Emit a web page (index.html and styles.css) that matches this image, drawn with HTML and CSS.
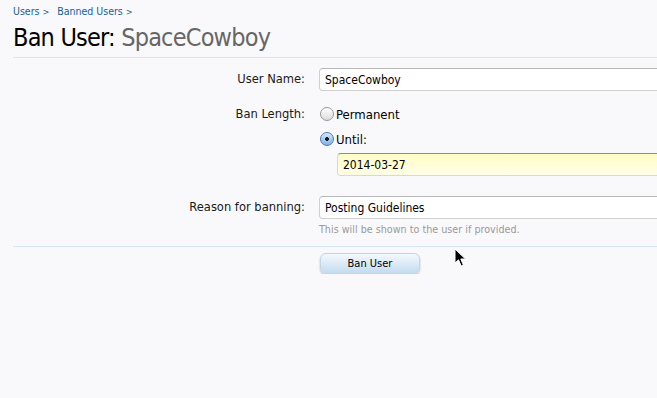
FILE: index.html
```html
<!DOCTYPE html>
<html lang="en">
<head>
    <meta charset="UTF-8">
    <title>Ban User: SpaceCowboy</title>
    <link rel="stylesheet" href="styles.css">
</head>
<body>

<div class="page">
    <div class="breadcrumb">
        <a href="#">Users</a> <span class="arrow">&gt;</span>
        <a href="#">Banned Users</a> <span class="arrow">&gt;</span>
    </div>

    <h1 class="title">Ban User: <em>SpaceCowboy</em></h1>

    <form class="ban-form">
        <div class="row">
            <label class="label" for="username">User Name:</label>
            <div class="control">
                <input type="text" id="username" class="text-input" value="SpaceCowboy">
            </div>
        </div>

        <div class="row">
            <div class="label choice-label">Ban Length:</div>
            <div class="control choices">
                <label class="choice"><input type="radio" name="length" class="radio"> Permanent</label>
                <label class="choice"><input type="radio" name="length" class="radio" checked> Until:</label>
                <input type="text" class="text-input date-input" value="2014-03-27">
            </div>
        </div>

        <div class="row reason-row">
            <label class="label" for="reason">Reason for banning:</label>
            <div class="control">
                <input type="text" id="reason" class="text-input" value="Posting Guidelines">
                <p class="hint">This will be shown to the user if provided.</p>
            </div>
        </div>

        <div class="submit-row">
            <button type="button" class="button">Ban User</button>
        </div>
    </form>
</div>

<!-- mouse pointer captured in the screenshot -->
<svg class="cursor" width="14" height="20" viewBox="0 0 14 20">
    <path d="M1 1 L1 15 L4.5 11.8 L7.2 18 L9.4 17 L6.8 11 L11.5 11 Z" fill="#000" stroke="#fff" stroke-width="1"/>
</svg>

</body>
</html>
```

FILE: styles.css
```css
html {
    overflow: hidden;
}
body {
    margin: 0;
    background-color: #f9f9fc;
    font-family: "DejaVu Sans Condensed", "DejaVu Sans", sans-serif;
    font-size: 12px;
    color: #000;
}
.page {
    width: 900px;
    padding: 0 13px;
}
.breadcrumb {
    font-size: 10.5px;
    padding-top: 5px;
    height: 14px;
    color: #176093;
}
.breadcrumb a {
    color: #176093;
    text-decoration: none;
}
.breadcrumb .arrow {
    font-size: 9px;
    margin-right: 5px;
}
.title {
    margin: 3px 0 0;
    font-size: 25px;
    font-weight: normal;
    letter-spacing: -0.8px;
    line-height: 32px;
    padding-bottom: 3px;
    border-bottom: 1px solid #d7e8f6;
    color: #000;
}
.title em {
    font-style: normal;
    color: #666;
}
.ban-form {
    padding-top: 10px;
}
.row {
    display: grid;
    grid-template-columns: 292px 1fr;
    column-gap: 14px;
    margin-bottom: 12px;
}
.label {
    text-align: right;
    font-size: 12.8px;
    line-height: 22px;
    color: #1a1a1a;
}
.choice-label {
    line-height: 16px;
    padding-top: 3px;
}
.text-input {
    box-sizing: border-box;
    width: 360px;
    height: 23px;
    padding: 0 5px;
    font-family: inherit;
    font-size: 12px;
    color: #000;
    background: #fff;
    border: 1px solid #cfcfcf;
    border-top-color: #b8b8b8;
    border-radius: 4px;
    margin: 0;
}
.choices {
    display: flex;
    flex-direction: column;
    padding-top: 3px;
}
.choice {
    display: flex;
    align-items: center;
    height: 16px;
    margin-bottom: 9px;
    font-size: 13px;
}
.radio {
    appearance: none;
    width: 14px;
    height: 14px;
    margin: 0 2px 0 1px;
    border-radius: 50%;
    border: 1px solid #9a9a9a;
    background: linear-gradient(#ffffff, #dcdcdc);
    box-sizing: border-box;
}
.radio:checked {
    border-color: #4a7bb5;
    background: radial-gradient(circle at 50% 50%, #1a1a1a 0 1.6px, transparent 2.2px),
                linear-gradient(#d4e8fb, #7fb3e6);
}
.date-input {
    margin: -3px 0 0 18px;
    background: linear-gradient(#fffcc6, #fffee6);
    border-color: #d8d8d8;
    border-top-color: #8c8c8c;
}
.reason-row {
    margin-bottom: 0;
    margin-top: 20px;
}
.hint {
    margin: 4px 0 0;
    font-size: 10.7px;
    color: #999;
}
.submit-row {
    margin-top: 10px;
    border-top: 1px solid #d7e8f6;
    padding: 6px 0 0 307px;
}
.button {
    width: 100px;
    height: 21px;
    font-family: inherit;
    font-size: 11px;
    color: #000;
    border: 1px solid #c4d6e6;
    border-radius: 6px;
    background: linear-gradient(#f4f8fc, #c3dcf0);
    box-shadow: 0 1px 2px rgba(0, 0, 0, 0.25);
    cursor: pointer;
}
.cursor {
    position: absolute;
    left: 454px;
    top: 248px;
}
```
